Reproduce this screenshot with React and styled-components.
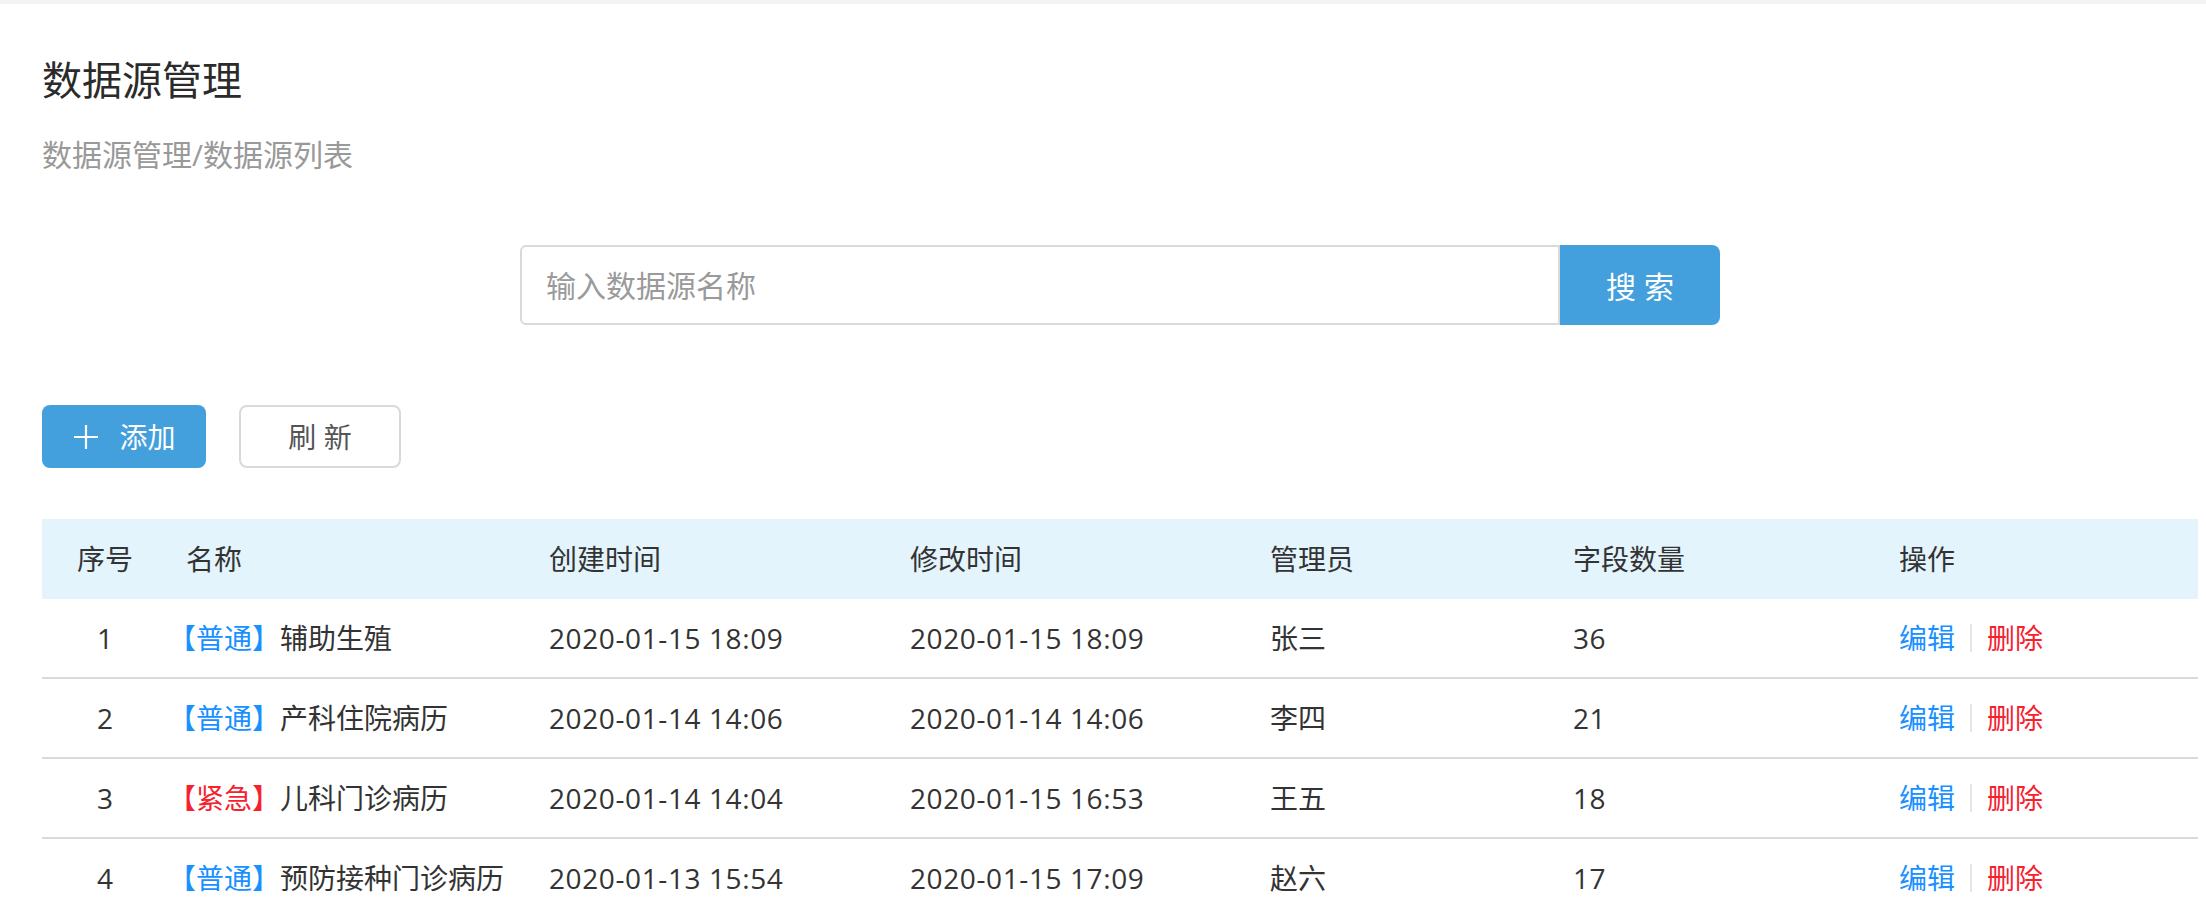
import React from "react";
import styled, { createGlobalStyle } from "styled-components";

const GlobalStyle = createGlobalStyle`
  body {
    margin: 0;
    background: #fff;
    font-family: "Open Sans", "Noto Sans CJK SC", sans-serif;
    color: #333;
  }
`;

const Page = styled.div`
  border-top: 4px solid #f3f3f3;
  padding: 56px 8px 0 42px;
  overflow: hidden;
`;

const Title = styled.h1`
  margin: 0;
  font-size: 40px;
  line-height: 40px;
  font-weight: 400;
  color: #2b2b2b;
`;

const Crumb = styled.div`
  margin-top: 40px;
  font-size: 30px;
  line-height: 30px;
  color: #999;
`;

const SearchBar = styled.form`
  display: flex;
  justify-content: center;
  margin-top: 75px;
`;

const SearchInput = styled.input`
  box-sizing: border-box;
  width: 1040px;
  height: 80px;
  padding: 0 24px;
  border: 2px solid #d9d9d9;
  border-radius: 6px 0 0 6px;
  outline: none;
  font-family: inherit;
  font-size: 30px;
  color: #333;

  &::placeholder {
    color: #9a9a9a;
  }
`;

const SearchButton = styled.button`
  width: 160px;
  height: 80px;
  border: none;
  border-radius: 0 8px 8px 0;
  background: #43a0dd;
  color: #fff;
  font-family: inherit;
  font-size: 30px;
`;

const Toolbar = styled.div`
  display: flex;
  gap: 33px;
  margin-top: 80px;
`;

const Button = styled.button`
  box-sizing: border-box;
  display: flex;
  align-items: center;
  justify-content: center;
  gap: 19px;
  width: ${(p) => (p.$primary ? "164px" : "162px")};
  height: 63px;
  border-radius: 8px;
  border: ${(p) => (p.$primary ? "none" : "2px solid #d9d9d9")};
  background: ${(p) => (p.$primary ? "#43a0dd" : "#fff")};
  color: ${(p) => (p.$primary ? "#fff" : "#555")};
  font-family: inherit;
  font-size: 28px;
  line-height: 28px;
  padding: 0;
`;

const Table = styled.div`
  margin-top: 51px;
`;

const cols = "126px 381px 361px 360px 303px 326px 1fr";

const HeadRow = styled.div`
  display: grid;
  grid-template-columns: ${cols};
  align-items: center;
  height: 80px;
  background: #e3f4fd;
`;

const Row = styled.div`
  display: grid;
  grid-template-columns: ${cols};
  align-items: center;
  height: 78px;
  border-bottom: 2px solid #d9d9d9;
`;

const Cell = styled.div`
  font-size: 28px;
  line-height: 28px;
  color: #333;
  white-space: nowrap;
  text-align: ${(p) => (p.$center ? "center" : "left")};
  padding-left: ${(p) => (p.$indent ? "18px" : "0")};
  letter-spacing: ${(p) => (p.$num ? "0.6px" : "0")};
`;

const Tag = styled.span`
  color: ${(p) => (p.$urgent ? "#f5222d" : "#1890ff")};
`;

const Ops = styled.div`
  display: flex;
  align-items: center;
  font-size: 28px;
  line-height: 28px;
`;

const Link = styled.a`
  color: ${(p) => (p.$danger ? "#f5222d" : "#1890ff")};
  text-decoration: none;
  cursor: pointer;
`;

const Divider = styled.span`
  width: 2px;
  height: 28px;
  margin: 0 15px;
  background: #e3e6ea;
`;

const PlusIcon = () => (
  <svg width="28" height="28" viewBox="0 0 28 28">
    <path d="M14 2v24M2 14h24" stroke="#fff" strokeWidth="2.2" fill="none" />
  </svg>
);

const rows = [
  { id: 1, level: "普通", name: "辅助生殖", created: "2020-01-15 18:09", modified: "2020-01-15 18:09", admin: "张三", fields: 36 },
  { id: 2, level: "普通", name: "产科住院病历", created: "2020-01-14 14:06", modified: "2020-01-14 14:06", admin: "李四", fields: 21 },
  { id: 3, level: "紧急", name: "儿科门诊病历", created: "2020-01-14 14:04", modified: "2020-01-15 16:53", admin: "王五", fields: 18 },
  { id: 4, level: "普通", name: "预防接种门诊病历", created: "2020-01-13 15:54", modified: "2020-01-15 17:09", admin: "赵六", fields: 17 },
];

const App = () => {
  return (
    <>
      <GlobalStyle />
      <Page>
        <Title>数据源管理</Title>
        <Crumb>数据源管理/数据源列表</Crumb>

        <SearchBar onSubmit={(e) => e.preventDefault()}>
          <SearchInput placeholder="输入数据源名称" />
          <SearchButton type="submit">搜 索</SearchButton>
        </SearchBar>

        <Toolbar>
          <Button $primary>
            <PlusIcon />
            添加
          </Button>
          <Button>刷 新</Button>
        </Toolbar>

        <Table>
          <HeadRow>
            <Cell $center>序号</Cell>
            <Cell $indent>名称</Cell>
            <Cell>创建时间</Cell>
            <Cell>修改时间</Cell>
            <Cell>管理员</Cell>
            <Cell>字段数量</Cell>
            <Cell>操作</Cell>
          </HeadRow>
          {rows.map((r) => (
            <Row key={r.id}>
              <Cell $center>{r.id}</Cell>
              <Cell>
                <Tag $urgent={r.level === "紧急"}>【{r.level}】</Tag>
                {r.name}
              </Cell>
              <Cell $num>{r.created}</Cell>
              <Cell $num>{r.modified}</Cell>
              <Cell>{r.admin}</Cell>
              <Cell $num>{r.fields}</Cell>
              <Ops>
                <Link>编辑</Link>
                <Divider />
                <Link $danger>删除</Link>
              </Ops>
            </Row>
          ))}
        </Table>
      </Page>
    </>
  );
};

export default App;
